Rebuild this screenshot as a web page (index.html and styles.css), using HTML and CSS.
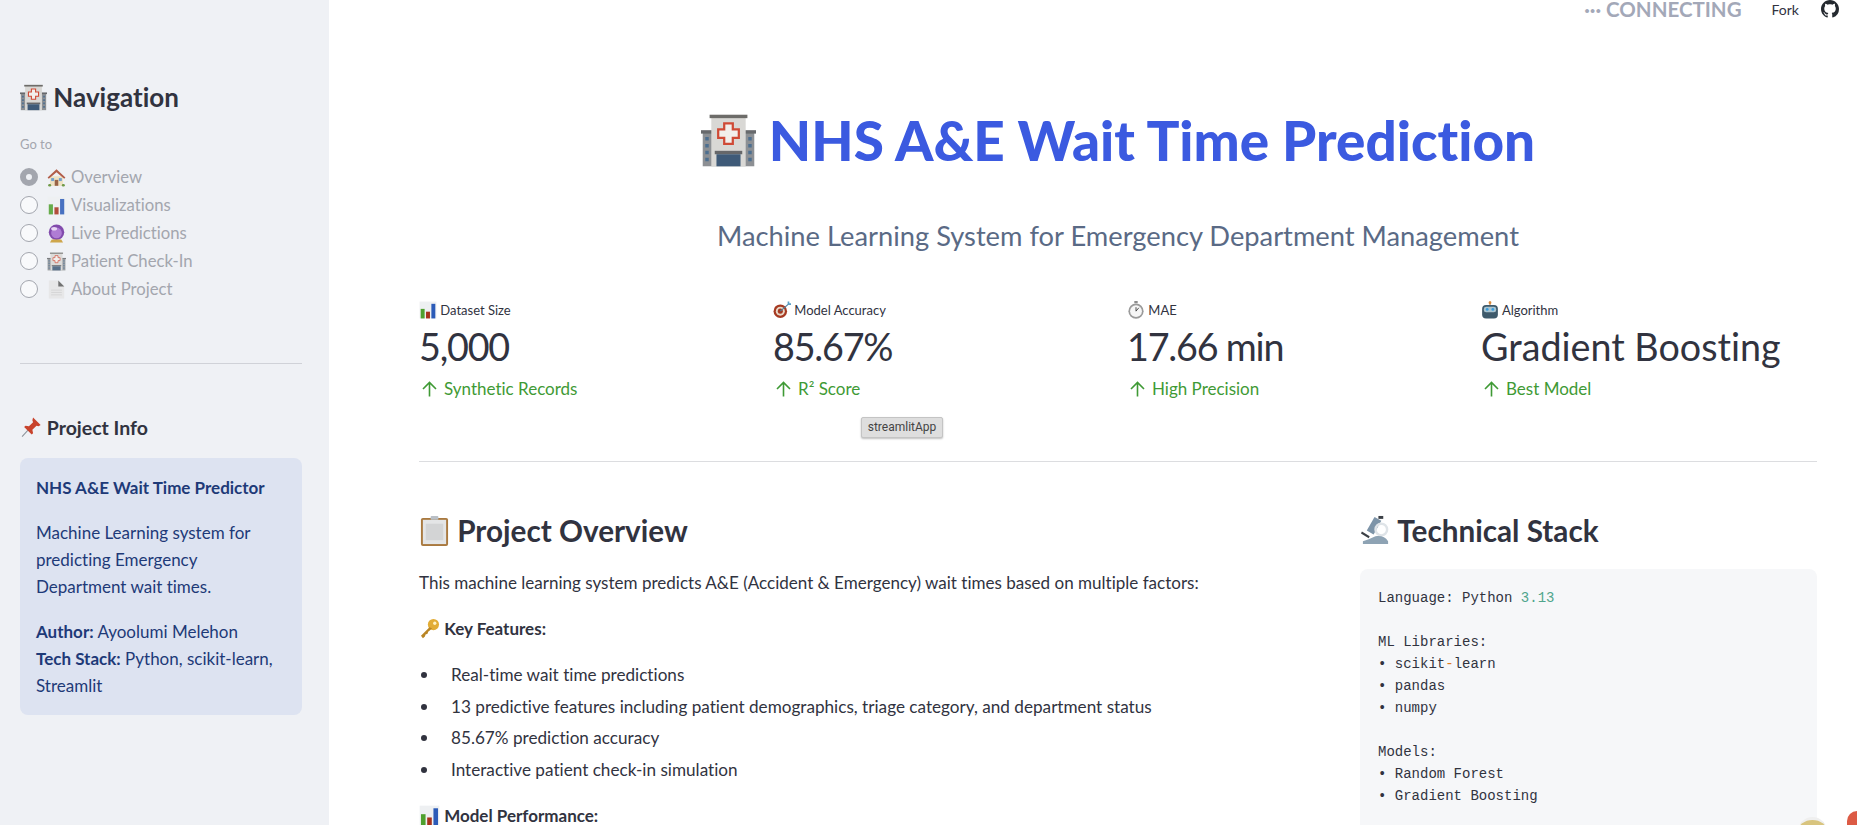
FILE: index.html
```html
<!DOCTYPE html>
<html lang="en">
<head>
    <meta charset="UTF-8">
    <meta name="viewport" content="width=device-width, initial-scale=1.0">
    <title>NHS A&amp;E Wait Time Prediction</title>
    <link rel="stylesheet" href="styles.css">
</head>
<body>
    <svg class="icon-defs" aria-hidden="true">
        <symbol id="i-hospital" viewBox="0 0 32 32">
            <rect x="1" y="11" width="30" height="20" fill="#8d9094"/>
            <rect x="0" y="10" width="32" height="2" fill="#67696c"/>
            <rect x="6" y="2" width="20" height="29" fill="#d9d8d5"/>
            <rect x="5" y="1" width="22" height="2" fill="#6d6c69"/>
            <path d="M13.5 6h5v3.5H22v5h-3.500V18h-5v-3.500H10v-5h3.500z" fill="#f2efec" stroke="#cf4a36" stroke-width="1.300"/>
            <rect x="8" y="22" width="16" height="2" fill="#66676a"/>
            <rect x="9" y="24" width="14" height="7" fill="#3f5a78"/>
            <path d="M2.500 14h2v2h-2zM2.500 18h2v2h-2zM2.500 22h2v2h-2zM2.500 26h2v2h-2zM27.500 14h2v2h-2zM27.500 18h2v2h-2zM27.500 22h2v2h-2zM27.500 26h2v2h-2z" fill="#4d6f90"/>
        </symbol>
        <symbol id="i-house" viewBox="0 0 32 32">
            <rect x="5" y="14" width="22" height="16" fill="#efe0bb"/>
            <path d="M16 2 1 16l2 2L16 7l13 11 2-2z" fill="#a8452d"/>
            <rect x="13" y="20" width="6" height="10" fill="#8a4b2a"/>
            <rect x="7" y="17" width="5" height="5" fill="#5d92c7"/>
            <rect x="20" y="17" width="5" height="5" fill="#5d92c7"/>
            <rect x="2" y="27" width="5" height="4" rx="2" fill="#5b8c2d"/>
            <rect x="25" y="27" width="5" height="4" rx="2" fill="#5b8c2d"/>
        </symbol>
        <symbol id="i-chart" viewBox="0 0 32 32">
            <rect x="1" y="1" width="30" height="30" fill="#eef0f2"/>
            <rect x="3" y="14" width="7" height="17" fill="#4fa02e"/>
            <rect x="12.500" y="19" width="7" height="12" fill="#a8321c"/>
            <rect x="22" y="5" width="7" height="26" fill="#2c5bb8"/>
        </symbol>
        <symbol id="i-ball" viewBox="0 0 32 32">
            <circle cx="16" cy="14" r="13" fill="#6f2fa0"/>
            <circle cx="16" cy="15" r="9" fill="#a468cf"/>
            <ellipse cx="12" cy="8" rx="5" ry="3" fill="#e7d2f4"/>
            <path d="M8 26h16l3 5H5z" fill="#c99a2e"/>
        </symbol>
        <symbol id="i-doc" viewBox="0 0 32 32">
            <path d="M3 1h16l10 10v20H3z" fill="#e6e6e6"/>
            <path d="M19 1l10 10H19z" fill="#5c5c5c"/>
            <path d="M7 17h18M7 21h18M7 25h18" stroke="#c4c4c4"/>
        </symbol>
        <symbol id="i-pin" viewBox="0 0 32 32">
            <path d="M3 30 14 18" stroke="#8a9299" stroke-width="1.500"/>
            <path d="M19 2l11 11-3 2-3-1-6 6 1 5-2 2L6 16l2-2 5 1 6-6-1-3z" fill="#c8432c"/>
        </symbol>
        <symbol id="i-target" viewBox="0 0 32 32">
            <circle cx="13" cy="18" r="12" fill="#a63a22"/>
            <circle cx="13" cy="18" r="8" fill="#e9d9c8"/>
            <circle cx="13" cy="18" r="4.500" fill="#a63a22"/>
            <path d="M13 18 28 5" stroke="#4d7f9e" stroke-width="2"/>
            <path d="M26 1h3v3h3v3h-5l-1-1z" fill="#5aa0c8"/>
        </symbol>
        <symbol id="i-watch" viewBox="0 0 32 32">
            <rect x="13" y="0" width="6" height="4" fill="#8c8c8c"/>
            <circle cx="16" cy="18" r="13.500" fill="#9a9a9a"/>
            <circle cx="16" cy="18" r="10.500" fill="#f6f6f6"/>
            <path d="M16 18 21 12M16 18v-7" stroke="#333" stroke-width="1.500"/>
        </symbol>
        <symbol id="i-robot" viewBox="0 0 32 32">
            <rect x="15" y="1" width="2" height="6" fill="#c87a30"/>
            <circle cx="16" cy="3" r="2.500" fill="#d9893a"/>
            <rect x="2" y="7" width="28" height="24" rx="7" fill="#3e5a6b"/>
            <rect x="5" y="10" width="22" height="10" rx="4" fill="#a9c3cf"/>
            <circle cx="11" cy="15" r="2.500" fill="#3a9ddc"/>
            <circle cx="21" cy="15" r="2.500" fill="#3a9ddc"/>
        </symbol>
        <symbol id="i-clipboard" viewBox="0 0 32 32">
            <rect x="2" y="3" width="28" height="29" rx="2" fill="#a9793f"/>
            <rect x="4" y="5" width="24" height="25" fill="#e4e5e6"/>
            <rect x="7" y="9" width="18" height="17" fill="#d3d4d5"/>
            <rect x="12" y="1" width="8" height="4" rx="1" fill="#b9bfc6"/>
        </symbol>
        <symbol id="i-key" viewBox="0 0 32 32">
            <circle cx="22" cy="10" r="8.500" fill="#e2ac36"/>
            <circle cx="24" cy="8" r="2.500" fill="#fff2c4"/>
            <path d="M16 14 3 27l3 4 3-3 1-3 3-1 1-3 6-5z" fill="#b98524"/>
        </symbol>
        <symbol id="i-scope" viewBox="0 0 32 32">
            <path d="M15 2l7 4-8 14-7-4z" fill="#7d94a8"/>
            <circle cx="22" cy="15" r="6" fill="none" stroke="#dfe4e8" stroke-width="2.500"/>
            <path d="M3 30h26v-3c-3-5-8-6-13-5l-7 3-6 2z" fill="#8ea3b4"/>
            <path d="M2 17l8 5-1 2-8-5z" fill="#3b4046"/>
            <rect x="19" y="1" width="5" height="3" fill="#3b4046"/>
        </symbol>
        <symbol id="i-up" viewBox="0 0 15 16">
            <path d="M7.500 15.500V1.500M1 8l6.500-6.500L14 8" fill="none" stroke="currentColor" stroke-width="1.600"/>
        </symbol>
    </svg>

    <div class="app">
        <aside class="sidebar">
            <h2 class="nav-title"><svg class="emoji"><use href="#i-hospital"/></svg> Navigation</h2>
            <p class="radio-label">Go to</p>
            <ul class="radio-list">
                <li class="radio-row"><span class="radio radio-on"></span><svg class="emoji"><use href="#i-house"/></svg> Overview</li>
                <li class="radio-row"><span class="radio"></span><svg class="emoji"><use href="#i-chart"/></svg> Visualizations</li>
                <li class="radio-row"><span class="radio"></span><svg class="emoji"><use href="#i-ball"/></svg> Live Predictions</li>
                <li class="radio-row"><span class="radio"></span><svg class="emoji"><use href="#i-hospital"/></svg> Patient Check-In</li>
                <li class="radio-row"><span class="radio"></span><svg class="emoji"><use href="#i-doc"/></svg> About Project</li>
            </ul>
            <hr class="side-rule">
            <h3 class="info-title"><svg class="emoji"><use href="#i-pin"/></svg> Project Info</h3>
            <div class="info-box">
                <p><strong>NHS A&amp;E Wait Time Predictor</strong></p>
                <p>Machine Learning system for predicting Emergency Department wait times.</p>
                <p><strong>Author:</strong> Ayoolumi Melehon<br><strong>Tech Stack:</strong> Python, scikit-learn, Streamlit</p>
            </div>
        </aside>

        <main class="content">
            <header class="topbar">
                <span class="status"><span class="dots">···</span> CONNECTING</span>
                <span class="fork">Fork</span>
                <svg class="github" viewBox="0 0 16 16"><path fill="#24292f" d="M8 0C3.580 0 0 3.580 0 8c0 3.540 2.290 6.530 5.470 7.590.4.070.55-.17.55-.38 0-.19-.01-.82-.01-1.490-2.010.37-2.530-.49-2.690-.94-.09-.23-.48-.94-.82-1.130-.28-.15-.68-.52-.01-.53.63-.01 1.080.58 1.230.82.720 1.210 1.870.87 2.330.66.070-.52.280-.87.510-1.070-1.780-.2-3.640-.89-3.640-3.950 0-.87.310-1.590.820-2.150-.08-.2-.36-1.020.08-2.120 0 0 .67-.21 2.200.82.640-.18 1.320-.27 2-.27s1.360.09 2 .27c1.530-1.040 2.200-.82 2.200-.82.440 1.100.160 1.920.08 2.120.510.560.820 1.270.820 2.150 0 3.070-1.870 3.750-3.650 3.950.29.250.54.730.54 1.480 0 1.070-.01 1.930-.01 2.200 0 .21.150.46.550.38A8.010 8.010 0 0 0 16 8c0-4.420-3.580-8-8-8z"/></svg>
            </header>

            <h1 class="page-title"><svg class="emoji"><use href="#i-hospital"/></svg> NHS A&amp;E Wait Time Prediction</h1>
            <p class="subtitle">Machine Learning System for Emergency Department Management</p>

            <section class="metrics">
                <div class="metric">
                    <div class="metric-label"><svg class="emoji"><use href="#i-chart"/></svg> Dataset Size</div>
                    <div class="metric-value metric-num">5,000</div>
                    <div class="metric-delta"><svg class="arrow"><use href="#i-up"/></svg>Synthetic Records</div>
                </div>
                <div class="metric">
                    <div class="metric-label"><svg class="emoji"><use href="#i-target"/></svg> Model Accuracy</div>
                    <div class="metric-value metric-num">85.67%</div>
                    <div class="metric-delta"><svg class="arrow"><use href="#i-up"/></svg>R² Score</div>
                    <span class="tooltip">streamlitApp</span>
                </div>
                <div class="metric">
                    <div class="metric-label"><svg class="emoji"><use href="#i-watch"/></svg> MAE</div>
                    <div class="metric-value metric-num">17.66 min</div>
                    <div class="metric-delta"><svg class="arrow"><use href="#i-up"/></svg>High Precision</div>
                </div>
                <div class="metric">
                    <div class="metric-label"><svg class="emoji"><use href="#i-robot"/></svg> Algorithm</div>
                    <div class="metric-value">Gradient Boosting</div>
                    <div class="metric-delta"><svg class="arrow"><use href="#i-up"/></svg>Best Model</div>
                </div>
            </section>

            <hr class="main-rule">

            <section class="columns">
                <div class="col-left">
                    <h2 class="section-title"><svg class="emoji"><use href="#i-clipboard"/></svg> Project Overview</h2>
                    <p class="intro">This machine learning system predicts A&amp;E (Accident &amp; Emergency) wait times based on multiple factors:</p>
                    <p class="sub-head"><svg class="emoji"><use href="#i-key"/></svg> Key Features:</p>
                    <ul class="features">
                        <li>Real-time wait time predictions</li>
                        <li>13 predictive features including patient demographics, triage category, and department status</li>
                        <li>85.67% prediction accuracy</li>
                        <li>Interactive patient check-in simulation</li>
                    </ul>
                    <p class="sub-head"><svg class="emoji"><use href="#i-chart"/></svg> Model Performance:</p>
                </div>
                <div class="col-right">
                    <h2 class="section-title"><svg class="emoji"><use href="#i-scope"/></svg> Technical Stack</h2>
<pre class="code-box">Language: Python <span class="num">3.13</span>

ML Libraries:
• scikit<span class="op">-</span>learn
• pandas
• numpy

Models:
• Random Forest
• Gradient Boosting</pre>
                </div>
            </section>
        </main>
    </div>

    <div class="corner-avatar"></div>
    <div class="corner-badge"></div>
</body>
</html>
```

FILE: styles.css
```css
* {
    margin: 0;
    padding: 0;
    box-sizing: border-box;
}

html, body {
    height: 100%;
    overflow: hidden;
}

body {
    font-family: 'Lato', 'Noto Sans', sans-serif;
    font-variant-ligatures: none;
    color: #31333f;
    background: #fff;
}

.icon-defs {
    width: 0;
    height: 0;
    display: block;
}

.emoji {
    width: 1.1em;
    height: 1.1em;
    vertical-align: -0.15em;
}

.app {
    display: flex;
    height: 825px;
    overflow: hidden;
}

/* Sidebar */
.sidebar {
    width: 329px;
    flex-shrink: 0;
    background: #eff1f5;
    padding: 77px 27px 0 20px;
}

.nav-title {
    font-size: 26px;
    font-weight: 700;
    line-height: 40px;
}

.nav-title .emoji {
    width: 27px;
    height: 27px;
    vertical-align: -4px;
}

.radio-label {
    font-size: 13px;
    line-height: 20px;
    margin-top: 17px;
    color: #a3a6ae;
}

.radio-list {
    list-style: none;
    margin-top: 9px;
}

.radio-row {
    display: flex;
    align-items: center;
    height: 28px;
    font-size: 16.700px;
    color: #a3a6ae;
    gap: 5px;
}

.radio-row .emoji {
    width: 19px;
    height: 19px;
    opacity: 0.85;
}

.radio {
    width: 18px;
    height: 18px;
    border-radius: 50%;
    border: 1px solid #a3a6ae;
    background: #f8f9fb;
    margin-right: 4px;
}

.radio-on {
    border: 6px solid #a3a6ae;
    background: #eff1f5;
}

.side-rule {
    border: none;
    border-top: 1px solid #d0d2d8;
    margin-top: 60px;
}

.info-title {
    font-size: 19.500px;
    font-weight: 700;
    line-height: 30px;
    margin-top: 49px;
}

.info-title .emoji {
    width: 22px;
    height: 22px;
    vertical-align: -3px;
}

.info-box {
    margin-top: 15px;
    padding: 16px;
    background: #dde3f1;
    border-radius: 8px;
    font-size: 17px;
    line-height: 27px;
    color: #1e3a78;
}

.info-box p + p {
    margin-top: 18px;
}

/* Main */
.content {
    flex: 1;
    min-width: 0;
    padding: 0 40px 0 90px;
}

.topbar {
    display: flex;
    justify-content: flex-end;
    align-items: center;
    height: 18px;
}

.status {
    font-size: 20.500px;
    font-weight: 700;
    color: #a3a8b8;
    margin-right: 30px;
}

.fork {
    font-size: 14px;
    margin-right: 22px;
}

.github {
    width: 18px;
    height: 18px;
    margin-right: -22px;
}

.page-title {
    margin-top: 87px;
    font-size: 54.800px;
    font-weight: 900;
    line-height: 70px;
    color: #3b5ae0;
    text-align: center;
}

.page-title .emoji {
    width: 55px;
    height: 57px;
    vertical-align: -8px;
}

.subtitle {
    margin-top: 41px;
    font-size: 27.300px;
    line-height: 40px;
    color: #5a6a85;
    text-align: center;
}

.metrics {
    display: grid;
    grid-template-columns: repeat(4, 354px);
    margin-top: 44px;
}

.metric {
    position: relative;
}

.metric-label {
    font-size: 13px;
    line-height: 20px;
}

.metric-label .emoji {
    width: 18px;
    height: 18px;
    vertical-align: -4px;
}

.metric-value {
    margin-top: 2px;
    font-size: 37.700px;
    line-height: 50px;
}

.metric-num {
    letter-spacing: -1.200px;
}

.metric-delta {
    display: flex;
    align-items: center;
    gap: 7px;
    margin-top: 5px;
    padding-left: 3px;
    font-size: 17px;
    line-height: 24px;
    color: #3f9a35;
}

.arrow {
    width: 15px;
    height: 16px;
}

.tooltip {
    position: absolute;
    left: 88px;
    top: 117px;
    width: 82px;
    height: 21px;
    font-family: 'Roboto', sans-serif;
    font-size: 12px;
    line-height: 19px;
    text-align: center;
    color: #444;
    background: #dedede;
    border: 1px solid #c4c4c4;
    border-radius: 2px;
    box-shadow: 0 1px 2px rgba(0, 0, 0, 0.25);
}

.main-rule {
    border: none;
    border-top: 1px solid #dcdde0;
    margin-top: 60px;
}

.columns {
    display: flex;
    gap: 34px;
    margin-top: 47px;
}

.col-left {
    width: 907px;
    flex-shrink: 0;
}

.col-right {
    flex: 1;
    min-width: 0;
}

.section-title {
    font-size: 29.700px;
    font-weight: 700;
    line-height: 44px;
}

.section-title .emoji {
    width: 31px;
    height: 31px;
    vertical-align: -4px;
}

.intro {
    margin-top: 17px;
    font-size: 17.050px;
    line-height: 26px;
}

.sub-head {
    margin-top: 20px;
    font-size: 17px;
    font-weight: 700;
    line-height: 26px;
}

.sub-head .emoji {
    width: 21px;
    height: 21px;
    vertical-align: -4px;
}

.features {
    list-style: none;
    margin-top: 20px;
    font-size: 17.150px;
    line-height: 26px;
}

.features li {
    display: flex;
    align-items: center;
    margin-bottom: 5.600px;
}

.features li::before {
    content: "";
    width: 6px;
    height: 6px;
    margin: 0 24px 0 2px;
    border-radius: 50%;
    background: #31333f;
}

.features li:last-child {
    margin-bottom: 0;
}

.code-box {
    margin-top: 16px;
    height: 300px;
    padding: 18px;
    background: #f6f7f9;
    border-radius: 8px;
    font-family: 'Liberation Mono', monospace;
    font-size: 14px;
    line-height: 22px;
    color: #31333f;
}

.num {
    color: #4fa58c;
}

.op {
    color: #e0791c;
}

.corner-avatar {
    position: fixed;
    left: 1798px;
    top: 817px;
    width: 29px;
    height: 29px;
    border-radius: 50%;
    background: #d8c47e;
    border-top: 3px solid #efefef;
}

.corner-badge {
    position: fixed;
    left: 1847px;
    top: 811px;
    width: 30px;
    height: 30px;
    border-radius: 10px;
    background: #dc5b45;
}
```
